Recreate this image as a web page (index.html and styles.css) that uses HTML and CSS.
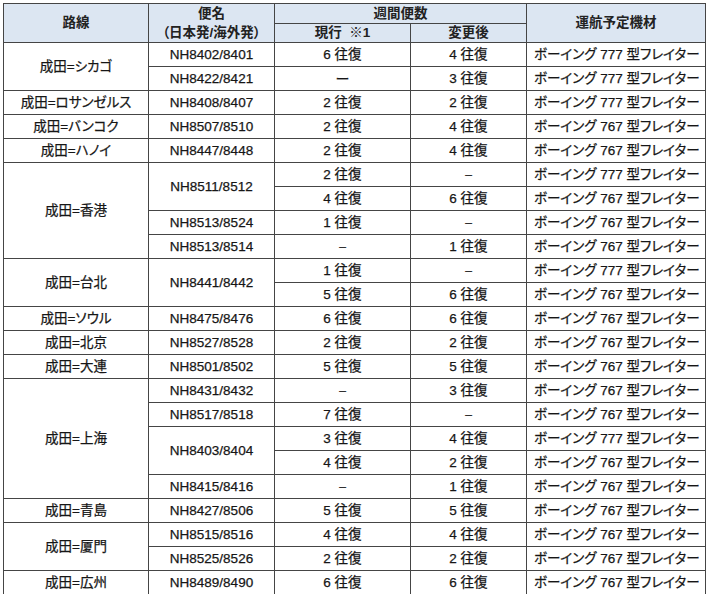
FILE: index.html
```html
<!DOCTYPE html>
<html lang="ja">
<head>
<meta charset="utf-8">
<link rel="stylesheet" href="styles.css">
</head>
<body>
<table class="sched">
  <colgroup>
    <col class="c-route"><col class="c-flight"><col class="c-now"><col class="c-after"><col class="c-equip">
  </colgroup>
  <thead>
    <tr class="h1">
      <th rowspan="2">路線</th>
      <th rowspan="2" class="two">便名<br>（日本発/海外発）</th>
      <th colspan="2">週間便数</th>
      <th rowspan="2">運航予定機材</th>
    </tr>
    <tr class="h2">
      <th>現行&nbsp;&nbsp;※1</th>
      <th>変更後</th>
    </tr>
  </thead>
  <tbody>
    <tr><td rowspan="2">成田=シカゴ</td><td>NH8402/8401</td><td>6 往復</td><td>4 往復</td><td class="eq">ボーイング 777 型フレイター</td></tr>
    <tr><td>NH8422/8421</td><td class="long">ー</td><td>3 往復</td><td class="eq">ボーイング 777 型フレイター</td></tr>
    <tr><td>成田=ロサンゼルス</td><td>NH8408/8407</td><td>2 往復</td><td>2 往復</td><td class="eq">ボーイング 777 型フレイター</td></tr>
    <tr><td>成田=バンコク</td><td>NH8507/8510</td><td>2 往復</td><td>4 往復</td><td class="eq">ボーイング 767 型フレイター</td></tr>
    <tr><td>成田=ハノイ</td><td>NH8447/8448</td><td>2 往復</td><td>4 往復</td><td class="eq">ボーイング 767 型フレイター</td></tr>
    <tr><td rowspan="4">成田=香港</td><td rowspan="2">NH8511/8512</td><td>2 往復</td><td class="dash">–</td><td class="eq">ボーイング 777 型フレイター</td></tr>
    <tr><td>4 往復</td><td>6 往復</td><td class="eq">ボーイング 767 型フレイター</td></tr>
    <tr><td>NH8513/8524</td><td>1 往復</td><td class="dash">–</td><td class="eq">ボーイング 767 型フレイター</td></tr>
    <tr><td>NH8513/8514</td><td class="dash">–</td><td>1 往復</td><td class="eq">ボーイング 767 型フレイター</td></tr>
    <tr><td rowspan="2">成田=台北</td><td rowspan="2">NH8441/8442</td><td>1 往復</td><td class="dash">–</td><td class="eq">ボーイング 777 型フレイター</td></tr>
    <tr><td>5 往復</td><td>6 往復</td><td class="eq">ボーイング 767 型フレイター</td></tr>
    <tr><td>成田=ソウル</td><td>NH8475/8476</td><td>6 往復</td><td>6 往復</td><td class="eq">ボーイング 767 型フレイター</td></tr>
    <tr><td>成田=北京</td><td>NH8527/8528</td><td>2 往復</td><td>2 往復</td><td class="eq">ボーイング 767 型フレイター</td></tr>
    <tr><td>成田=大連</td><td>NH8501/8502</td><td>5 往復</td><td>5 往復</td><td class="eq">ボーイング 767 型フレイター</td></tr>
    <tr><td rowspan="5">成田=上海</td><td>NH8431/8432</td><td class="dash">–</td><td>3 往復</td><td class="eq">ボーイング 767 型フレイター</td></tr>
    <tr><td>NH8517/8518</td><td>7 往復</td><td class="dash">–</td><td class="eq">ボーイング 767 型フレイター</td></tr>
    <tr><td rowspan="2">NH8403/8404</td><td>3 往復</td><td>4 往復</td><td class="eq">ボーイング 777 型フレイター</td></tr>
    <tr><td>4 往復</td><td>2 往復</td><td class="eq">ボーイング 767 型フレイター</td></tr>
    <tr><td>NH8415/8416</td><td class="dash">–</td><td>1 往復</td><td class="eq">ボーイング 767 型フレイター</td></tr>
    <tr><td>成田=青島</td><td>NH8427/8506</td><td>5 往復</td><td>5 往復</td><td class="eq">ボーイング 767 型フレイター</td></tr>
    <tr><td rowspan="2">成田=厦門</td><td>NH8515/8516</td><td>4 往復</td><td>4 往復</td><td class="eq">ボーイング 767 型フレイター</td></tr>
    <tr><td>NH8525/8526</td><td>2 往復</td><td>2 往復</td><td class="eq">ボーイング 767 型フレイター</td></tr>
    <tr><td>成田=広州</td><td>NH8489/8490</td><td>6 往復</td><td>6 往復</td><td class="eq">ボーイング 767 型フレイター</td></tr>
  </tbody>
</table>
</body>
</html>
```

FILE: styles.css
```css
html, body {
  margin: 0;
  padding: 0;
  background: #ffffff;
}
body {
  padding: 3px 0 0 3px;
  font-family: "Liberation Sans", "Noto Sans CJK JP", sans-serif;
  font-size: 13.5px;
  color: #161616;
}
.sched {
  border-collapse: collapse;
  table-layout: fixed;
  width: 702px;
}
.c-route { width: 145px; }
.c-flight { width: 126px; }
.c-now { width: 136px; }
.c-after { width: 116px; }
.c-equip { width: 179px; }

.sched th,
.sched td {
  border: 1px solid #454545;
  padding: 0;
  text-align: center;
  vertical-align: middle;
  white-space: nowrap;
  line-height: 16px;
  font-feature-settings: "palt";
}
.sched td {
  -webkit-text-stroke: 0.25px #161616;
}
.sched th {
  background: #dce6f2;
  font-weight: 700;
  color: #222;
}
.h1 th { height: 19px; }
.h2 th { height: 18px; }
.sched th.two { line-height: 19px; }
.sched tbody tr { height: 24px; }
.sched td { height: 23px; }
.sched td.eq {
  text-align: left;
  padding-left: 7px;
}
.sched td.long { font-size: 14px; }
.sched td.dash { font-size: 12px; color: #444; }
```
